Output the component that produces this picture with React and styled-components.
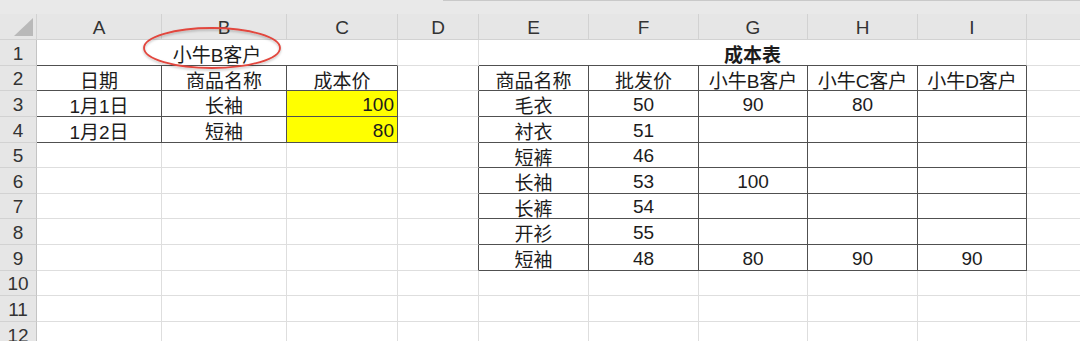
import React from "react"
import styled, { createGlobalStyle } from "styled-components"

const GRID = "#dedede"
const DARK = "#505050"
const HEAD_BG = "#e6e6e6"
const HEAD_LINE = "#d2d2d2"

const GlobalStyle = createGlobalStyle`
  html, body {
    margin: 0;
    padding: 0;
    background: #fff;
  }
  body {
    width: 1080px;
    height: 341px;
    overflow: hidden;
    font-family: "Liberation Sans", "Noto Sans CJK SC", sans-serif;
    color: #1c1c1c;
  }
`

const Sheet = styled.div`
  position: relative;
  width: 1080px;
  height: 341px;
  overflow: hidden;
`

const TopStrip = styled.div`
  display: flex;
  height: 14px;
  background: #e9e9e9;
`

const StripGap = styled.div`
  width: 443px;
`

const StripEdge = styled.div`
  flex: 1;
  border-top: 1px solid #c9c9c9;
`

const Grid = styled.div`
  display: grid;
  grid-template-columns: ${({ $cols }) => $cols.map((w) => `${w}px`).join(" ")};
  grid-template-rows: ${({ $rows }) => $rows.map((h) => `${h}px`).join(" ")};
  font-size: 19px;
`

const Corner = styled.div`
  box-sizing: border-box;
  display: flex;
  align-items: flex-end;
  justify-content: flex-end;
  padding: 0 3px 3px 0;
  background: ${HEAD_BG};
  border-right: 1px solid ${HEAD_LINE};
  border-bottom: 1px solid ${HEAD_LINE};
`

const CornerMark = styled.div`
  width: 0;
  height: 0;
  border-left: 19px solid transparent;
  border-bottom: 18px solid #b9b9b9;
`

const ColHead = styled.div`
  box-sizing: border-box;
  display: flex;
  align-items: center;
  justify-content: center;
  padding-top: 3px;
  background: ${HEAD_BG};
  color: #333;
  border-right: 1px solid ${HEAD_LINE};
  border-bottom: 1px solid ${HEAD_LINE};
`

const RowHead = styled.div`
  box-sizing: border-box;
  display: flex;
  align-items: center;
  justify-content: center;
  padding-top: 2px;
  background: ${HEAD_BG};
  color: #333;
  border-right: 1px solid #c4c4c4;
  border-bottom: 1px solid ${HEAD_LINE};
`

const Cell = styled.div`
  box-sizing: border-box;
  grid-column: span ${({ $span }) => $span};
  display: flex;
  align-items: center;
  justify-content: ${({ $align }) => ($align === "right" ? "flex-end" : "center")};
  padding: 2px 3px 0;
  background: ${({ $fill }) => $fill || "#fff"};
  border-right: 1px solid ${({ $darkRight }) => ($darkRight ? DARK : GRID)};
  border-bottom: 1px solid ${({ $darkBottom }) => ($darkBottom ? DARK : GRID)};
  font-weight: ${({ $bold }) => ($bold ? 700 : 400)};
  white-space: nowrap;
  overflow: hidden;
`

const Callout = styled.svg`
  position: absolute;
  left: 140px;
  top: 25px;
  overflow: visible;
`

// last column runs past the window edge, its letter is out of view
const COLS = ["A", "B", "C", "D", "E", "F", "G", "H", "I", "J"]
const COL_WIDTHS = [125, 125, 111, 81, 110, 110, 109, 110, 109, 200]
const ROW_HEIGHTS = [26, 25, 26, 26, 25, 26, 25, 26, 26, 25, 26, 26]

const YELLOW = "#ffff00"

const cells = {
  A1: { text: "小牛B客户", span: 3 },
  A2: { text: "日期" },
  B2: { text: "商品名称" },
  C2: { text: "成本价" },
  A3: { text: "1月1日" },
  B3: { text: "长袖" },
  C3: { text: "100", align: "right", fill: YELLOW },
  A4: { text: "1月2日" },
  B4: { text: "短袖" },
  C4: { text: "80", align: "right", fill: YELLOW },
  E1: { text: "成本表", span: 5, bold: true },
  E2: { text: "商品名称" },
  F2: { text: "批发价" },
  G2: { text: "小牛B客户" },
  H2: { text: "小牛C客户" },
  I2: { text: "小牛D客户" },
  E3: { text: "毛衣" },
  F3: { text: "50" },
  G3: { text: "90" },
  H3: { text: "80" },
  E4: { text: "衬衣" },
  F4: { text: "51" },
  E5: { text: "短裤" },
  F5: { text: "46" },
  E6: { text: "长袖" },
  F6: { text: "53" },
  G6: { text: "100" },
  E7: { text: "长裤" },
  F7: { text: "54" },
  E8: { text: "开衫" },
  F8: { text: "55" },
  E9: { text: "短袖" },
  F9: { text: "48" },
  G9: { text: "80" },
  H9: { text: "90" },
  I9: { text: "90" },
}

// two bordered ranges: A2:C4 and E2:I9
const tables = [
  { c0: 0, c1: 2, r0: 2, r1: 4 },
  { c0: 4, c1: 8, r0: 2, r1: 9 },
]

const inside = (t, c, r) => c >= t.c0 && c <= t.c1 && r >= t.r0 && r <= t.r1

const darkRight = (c, r, span) =>
  tables.some((t) => inside(t, c + span - 1, r) || inside(t, c + span, r))

const darkBottom = (c, r, span) =>
  tables.some((t) => {
    for (let i = c; i < c + span; i++) {
      if (inside(t, i, r) || inside(t, i, r + 1)) return true
    }
    return false
  })

const buildRow = (r) => {
  const out = []
  let c = 0
  while (c < COLS.length) {
    const key = `${COLS[c]}${r}`
    const cell = cells[key] || {}
    const span = cell.span || 1
    out.push(
      <Cell
        key={key}
        $span={span}
        $align={cell.align}
        $fill={cell.fill}
        $bold={cell.bold}
        $darkRight={darkRight(c, r, span)}
        $darkBottom={darkBottom(c, r, span)}
      >
        {cell.text}
      </Cell>
    )
    c += span
  }
  return out
}

const App = () => {
  return (
    <>
      <GlobalStyle />
      <Sheet>
        <TopStrip>
          <StripGap />
          <StripEdge />
        </TopStrip>
        <Grid $cols={[37, ...COL_WIDTHS]} $rows={[26, ...ROW_HEIGHTS]}>
          <Corner>
            <CornerMark />
          </Corner>
          {COLS.map((c, i) => (
            <ColHead key={c}>{i < COLS.length - 1 ? c : null}</ColHead>
          ))}
          {ROW_HEIGHTS.map((_, i) => (
            <React.Fragment key={i}>
              <RowHead>{i + 1}</RowHead>
              {buildRow(i + 1)}
            </React.Fragment>
          ))}
        </Grid>
        <Callout width="144" height="46" viewBox="0 0 144 46">
          <defs>
            <filter id="soft" x="-10%" y="-20%" width="120%" height="150%">
              <feDropShadow dx="0" dy="1.5" stdDeviation="1" floodColor="#000" floodOpacity="0.25" />
            </filter>
          </defs>
          <ellipse cx="72" cy="23" rx="68" ry="20" fill="none" stroke="#e2463e" strokeWidth="1.8" filter="url(#soft)" />
        </Callout>
      </Sheet>
    </>
  )
}

export default App
